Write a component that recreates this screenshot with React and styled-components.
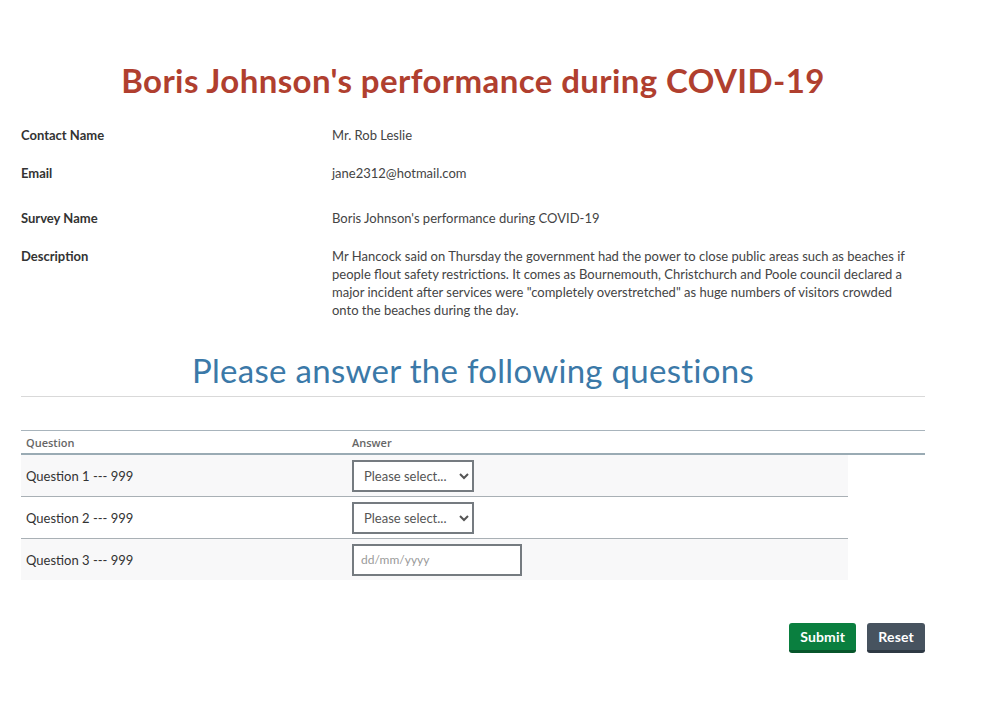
import styled, { createGlobalStyle } from 'styled-components';

const GlobalStyle = createGlobalStyle`
	body {
		margin: 0;
		background: #fff;
		font-family: 'Lato', 'Open Sans', sans-serif;
		color: #333;
	}
`;

const Page = styled.div`
	width: 904px;
	padding: 60px 0 0 21px;
`;

const Title = styled.h1`
	margin: 0 0 26px;
	text-align: center;
	font-size: 33px;
	line-height: 40px;
	letter-spacing: 0.4px;
	font-weight: 700;
	color: #b03f2f;
`;

const InfoRow = styled.div`
	display: grid;
	grid-template-columns: 311px 1fr;
	margin-bottom: ${(p) => p.spacing || 20}px;
	font-size: 13px;
	line-height: 18px;
`;

const Label = styled.div`
	font-weight: 700;
	color: #333;
`;

const Value = styled.div`
	color: #444;
	padding-right: 4px;
`;

const SubTitle = styled.h2`
	margin: 31px 0 0;
	padding-bottom: 6px;
	border-bottom: 1px solid #d9d9d9;
	text-align: center;
	font-size: 33px;
	line-height: 40px;
	letter-spacing: 0.3px;
	font-weight: 400;
	color: #3b79a8;
`;

const Table = styled.div`
	margin-top: 33px;
`;

const HeadRow = styled.div`
	display: grid;
	grid-template-columns: 326px 1fr;
	border-top: 1px solid #a8b4bc;
	border-bottom: 2px solid #9aabb4;
	height: 22px;
	align-items: center;
	font-size: 11px;
	color: #666;
	font-family: 'Open Sans', sans-serif;
	font-weight: 600;

	span {
		padding-left: 5px;
	}
`;

const Body = styled.div`
	width: 827px;
`;

const Row = styled.div`
	display: grid;
	grid-template-columns: 326px 1fr;
	align-items: center;
	height: 41px;
	background: ${(p) => (p.striped ? '#f8f8f9' : '#fff')};
	border-top: ${(p) => (p.first ? 'none' : '1px solid #a9b0b5')};
	font-size: 13px;
	color: #333;
`;

const Cell = styled.div`
	padding-left: 5px;
`;

const Select = styled.select`
	width: 122px;
	height: 32px;
	border: 2px solid #757b80;
	border-radius: 0;
	background: #fff;
	font-family: inherit;
	font-size: 13px;
	color: #555;
	padding: 0 6px;
`;

const DateInput = styled.input`
	box-sizing: border-box;
	width: 170px;
	height: 32px;
	border: 2px solid #757b80;
	font-family: inherit;
	font-size: 12px;
	color: #999;
	padding: 0 7px;

	&::placeholder {
		color: #9a9a9a;
	}
`;

const Actions = styled.div`
	display: flex;
	justify-content: flex-end;
	gap: 11px;
	margin-top: 43px;
`;

const Button = styled.button`
	height: 30px;
	padding: 0 11px;
	border: none;
	border-radius: 3px;
	border-bottom: 3px solid ${(p) => (p.variant === 'primary' ? '#07562b' : '#2e3944')};
	background: ${(p) => (p.variant === 'primary' ? '#0a7f3f' : '#47535f')};
	color: #fff;
	font-family: inherit;
	font-size: 14px;
	font-weight: 700;
	letter-spacing: 0.2px;
	cursor: pointer;
`;

const info = [
	{ label: 'Contact Name', value: 'Mr. Rob Leslie', spacing: 20 },
	{ label: 'Email', value: 'jane2312@hotmail.com', spacing: 27 },
	{ label: 'Survey Name', value: "Boris Johnson's performance during COVID-19", spacing: 20 },
	{
		label: 'Description',
		value:
			'Mr Hancock said on Thursday the government had the power to close public areas such as beaches if people flout safety restrictions. It comes as Bournemouth, Christchurch and Poole council declared a major incident after services were "completely overstretched" as huge numbers of visitors crowded onto the beaches during the day.',
		spacing: 0,
	},
];

const questions = [
	{ id: 1, text: 'Question 1 --- 999', type: 'select' },
	{ id: 2, text: 'Question 2 --- 999', type: 'select' },
	{ id: 3, text: 'Question 3 --- 999', type: 'date' },
];

export default function App() {
	return (
		<>
			<GlobalStyle />
			<Page>
				<Title>Boris Johnson's performance during COVID-19</Title>
				{info.map((item) => (
					<InfoRow key={item.label} spacing={item.spacing}>
						<Label>{item.label}</Label>
						<Value>{item.value}</Value>
					</InfoRow>
				))}
				<SubTitle>Please answer the following questions</SubTitle>
				<Table>
					<HeadRow>
						<span>Question</span>
						<span>Answer</span>
					</HeadRow>
					<Body>
						{questions.map((q, i) => (
							<Row key={q.id} striped={i % 2 === 0} first={i === 0}>
								<Cell>{q.text}</Cell>
								<Cell>
									{q.type === 'select' ? (
										<Select defaultValue="">
											<option value="">Please select...</option>
											<option>Yes</option>
											<option>No</option>
										</Select>
									) : (
										<DateInput type="text" placeholder="dd/mm/yyyy" />
									)}
								</Cell>
							</Row>
						))}
					</Body>
				</Table>
				<Actions>
					<Button variant="primary">Submit</Button>
					<Button>Reset</Button>
				</Actions>
			</Page>
		</>
	);
}
